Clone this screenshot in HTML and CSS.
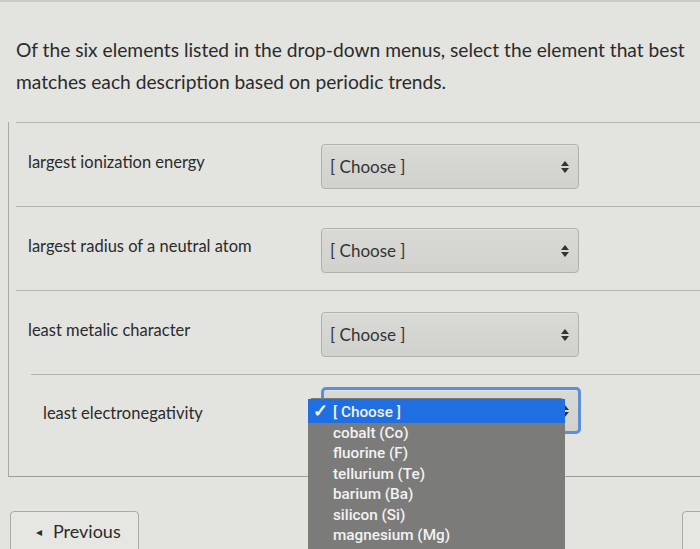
FILE: index.html
```html
<!DOCTYPE html>
<html lang="en">

<head>
    <meta charset="UTF-8" />
    <title>Quiz Question</title>
    <meta name="viewport" content="width=device-width, initial-scale=1.0" />
    <link rel="stylesheet" href="styles.css">
</head>

<body>

    <div class="question-text">
        Of the six elements listed in the drop-down menus, select the element that best<br />
        matches each description based on periodic trends.
    </div>

    <!-- Answer rows -->
    <div class="answers">
        <div class="row">
            <div class="label">largest ionization energy</div>
            <div class="select"><span>[ Choose ]</span><span class="arrows"></span></div>
        </div>
        <div class="row">
            <div class="label">largest radius of a neutral atom</div>
            <div class="select"><span>[ Choose ]</span><span class="arrows"></span></div>
        </div>
        <div class="row">
            <div class="label">least metalic character</div>
            <div class="select"><span>[ Choose ]</span><span class="arrows"></span></div>
        </div>
        <div class="row last-row">
            <div class="label">least electronegativity</div>
            <div class="select-wrap">
                <div class="select focused"><span></span><span class="arrows"></span></div>
                <ul class="menu">
                    <li class="active"><span class="check">✓</span>[ Choose ]</li>
                    <li>cobalt (Co)</li>
                    <li>fluorine (F)</li>
                    <li>tellurium (Te)</li>
                    <li>barium (Ba)</li>
                    <li>silicon (Si)</li>
                    <li>magnesium (Mg)</li>
                </ul>
            </div>
        </div>
    </div>

    <div class="nav">
        <button class="nav-btn"><span class="tri">◂</span> Previous</button>
        <button class="nav-btn next-btn" aria-label="Next"></button>
    </div>

</body>

</html>
```

FILE: styles.css
```css
body {
    margin: 0;
    padding: 0;
    font-family: Lato, "Open Sans", sans-serif;
    background: #e3e3e0;
    color: #2b2b2b;
    width: 700px;
    height: 549px;
    overflow: hidden;
    border-top: 2px solid #c9c9c6;
    box-sizing: border-box;
}

.question-text {
    padding: 32px 0 0 16px;
    font-size: 19.2px;
    line-height: 32px;
    margin-bottom: 24px;
    white-space: nowrap;
}

.answers {
    margin-left: 8px;
    border-left: 1px solid #a9a9a6;
    border-bottom: 1px solid #9d9d9a;
}

.row {
    margin-left: 7px;
    border-top: 1px solid #b3b3b0;
    padding: 21px 0 17px;
    display: grid;
    grid-template-columns: 305px 258px;
    align-items: start;
}

.label {
    padding: 8px 0 0 12px;
    font-size: 16.5px;
    line-height: 20px;
}

.select {
    height: 45px;
    box-sizing: border-box;
    border: 1px solid #b0b0ad;
    border-radius: 4px;
    background: linear-gradient(#d9d9d6, #d1d1ce);
    box-shadow: inset 0 1px 0 #e3e3e0;
    display: flex;
    align-items: center;
    justify-content: space-between;
    padding: 0 9px 0 8px;
    font-size: 17px;
    color: #333;
}

.arrows {
    width: 8px;
    height: 12px;
    position: relative;
}

.arrows::before,
.arrows::after {
    content: "";
    position: absolute;
    left: 0;
    border-left: 4px solid transparent;
    border-right: 4px solid transparent;
}

.arrows::before {
    top: 0;
    border-bottom: 5px solid #333;
}

.arrows::after {
    bottom: 0;
    border-top: 5px solid #333;
}

.last-row {
    padding: 12px 0 42px;
    margin-left: 22px;
    grid-template-columns: 290px 260px;
}

.last-row .label {
    padding-top: 16px;
}

.select-wrap {
    position: relative;
}

.select.focused {
    border: 3px solid #5c8fd6;
    height: 47px;
    border-radius: 5px;
}

.menu {
    position: absolute;
    top: 11px;
    left: -13px;
    width: 257px;
    margin: 0;
    padding: 1px 0 10px;
    list-style: none;
    background: #7b7b7a;
    border-radius: 5px;
    font-family: Roboto, "Liberation Sans", sans-serif;
    font-weight: 500;
    font-size: 15.3px;
    color: #f2f2f2;
    z-index: 2;
}

.menu li {
    height: 20.4px;
    line-height: 20px;
    padding-left: 25px;
}

.menu li.active {
    background: #1f6fe3;
    height: 24px;
    line-height: 24px;
    padding-left: 5px;
}

.check {
    display: inline-block;
    width: 20px;
    font-size: 18px;
    font-weight: 700;
}

.nav {
    display: flex;
    justify-content: space-between;
    margin-top: 34px;
    padding-left: 10px;
}

.nav-btn {
    font-family: Lato, sans-serif;
    font-size: 18px;
    color: #2b2b2b;
    background: #e6e6e3;
    border: 1px solid #a9a9a6;
    border-radius: 4px;
    width: 129px;
    height: 48px;
    padding: 0 0 8px 8px;
    text-align: center;
}

.tri {
    font-size: 12px;
    margin-right: 6px;
    vertical-align: 2px;
}

.next-btn {
    width: 60px;
    margin-right: -42px;
}
```
